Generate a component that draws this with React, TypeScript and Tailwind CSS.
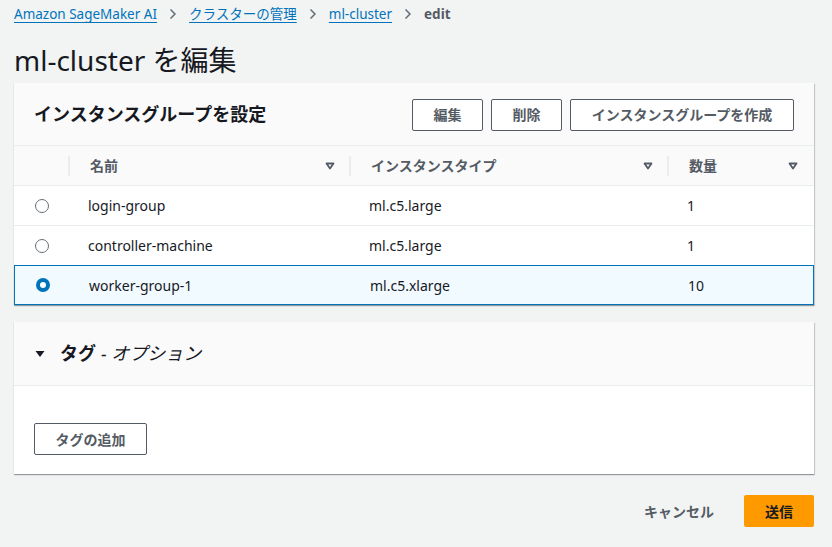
import { ChevronRight } from "lucide-react";

const font = { fontFamily: '"Noto Sans", "Noto Sans CJK JP", sans-serif' };

const crumbs = ["Amazon SageMaker AI", "クラスターの管理", "ml-cluster"];

const groups = [
  { name: "login-group", type: "ml.c5.large", count: 1 },
  { name: "controller-machine", type: "ml.c5.large", count: 1 },
  { name: "worker-group-1", type: "ml.c5.xlarge", count: 10, selected: true },
];

const SortIcon = () => (
  <svg width="10" height="8" viewBox="0 0 10 8" className="shrink-0">
    <path d="M1.5 1.5 H8.5 L5 6.5 Z" fill="none" stroke="#545b64" strokeWidth="1.8" strokeLinejoin="round" />
  </svg>
);

const Radio = ({ checked }: { checked?: boolean }) =>
  checked ? (
    <span className="block w-[14px] h-[14px] rounded-full border-[4px] border-[#0073bb] bg-white" />
  ) : (
    <span className="block w-[14px] h-[14px] rounded-full border border-[#687078] bg-white" />
  );

const Button = ({ children, className = "" }: { children: React.ReactNode; className?: string }) => (
  <button
    className={`h-[32px] rounded-[2px] border border-[#545b64] bg-white text-[14px] font-bold text-[#545b64] ${className}`}
  >
    {children}
  </button>
);

export default function App() {
  return (
    <div className="min-h-[547px] bg-[#f2f3f3] pl-[14px] pr-[18px] text-[#16191f]" style={font}>
      {/* breadcrumb */}
      <nav className="flex items-center h-[28px] text-[13.5px]">
        {crumbs.map((c) => (
          <span key={c} className="flex items-center">
            <a className="text-[#0073bb] underline underline-offset-[3px] decoration-1">{c}</a>
            <ChevronRight className="mx-[8px] w-[16px] h-[16px] text-[#687078]" strokeWidth={2.5} />
          </span>
        ))}
        <span className="font-bold text-[#545b64]">edit</span>
      </nav>

      <h1 className="text-[28px] leading-[36px] mt-[14px] mb-[5px] text-[#16191f]">ml-cluster を編集</h1>

      {/* instance groups */}
      <section className="bg-white shadow-[0_1px_1px_0_rgba(0,28,36,0.3),1px_1px_1px_0_rgba(0,28,36,0.15)]">
        <div className="flex items-center justify-between h-[62px] px-[20px] bg-[#fafafa]">
          <h2 className="text-[18px] font-bold">インスタンスグループを設定</h2>
          <div className="flex gap-[8px] pt-[1px]">
            <Button className="w-[71px]">編集</Button>
            <Button className="w-[71px]">削除</Button>
            <Button className="w-[224px]">インスタンスグループを作成</Button>
          </div>
        </div>
        <div className="grid grid-cols-[54px_281px_318px_1fr] h-[40px] items-center bg-[#fafafa] border-t border-[#eaeded] text-[14px] font-bold text-[#545b64]">
          <div />
          <div className="flex items-center justify-between pl-[20px] pr-[14px] border-l-2 border-[#eaeded] h-[20px]">
            名前 <SortIcon />
          </div>
          <div className="flex items-center justify-between pl-[20px] pr-[14px] border-l-2 border-[#eaeded] h-[20px]">
            インスタンスタイプ <SortIcon />
          </div>
          <div className="flex items-center justify-between pl-[20px] pr-[16px] border-l-2 border-[#eaeded] h-[20px]">
            数量 <SortIcon />
          </div>
        </div>
        {groups.map((g) => (
          <div
            key={g.name}
            className={`grid grid-cols-[54px_281px_318px_1fr] h-[40px] items-center text-[14px] border-t ${
              g.selected ? "bg-[#f1faff] border border-[#0073bb]" : "border-[#eaeded]"
            }`}
          >
            <div className="flex justify-center pl-[2px]">
              <Radio checked={g.selected} />
            </div>
            <div className="pl-[20px]">{g.name}</div>
            <div className="pl-[20px]">{g.type}</div>
            <div className="pl-[20px]">{g.count}</div>
          </div>
        ))}
      </section>

      {/* tags */}
      <section className="mt-[17px] bg-white shadow-[0_1px_1px_0_rgba(0,28,36,0.3),1px_1px_1px_0_rgba(0,28,36,0.15)]">
        <div className="flex items-center h-[64px] px-[20px] bg-[#fafafa] border-b border-[#eaeded]">
          <svg width="10" height="8" viewBox="0 0 10 8" className="ml-[1px] mr-[15px]">
            <path d="M0.5 1 H9.5 L5 7 Z" fill="#16191f" />
          </svg>
          <span className="text-[18px] font-bold">タグ</span>
          <span className="text-[18px] italic ml-[5px]">- オプション</span>
        </div>
        <div className="px-[20px] pt-[37px] pb-[19px]">
          <Button className="w-[113px]">タグの追加</Button>
        </div>
      </section>

      {/* footer */}
      <div className="flex justify-end items-center gap-[30px] mt-[21px]">
        <span className="text-[14px] font-bold text-[#545b64]">キャンセル</span>
        <button className="w-[70px] h-[32px] rounded-[2px] bg-[#ff9900] text-[14px] font-bold text-[#16191f]">
          送信
        </button>
      </div>
    </div>
  );
}
